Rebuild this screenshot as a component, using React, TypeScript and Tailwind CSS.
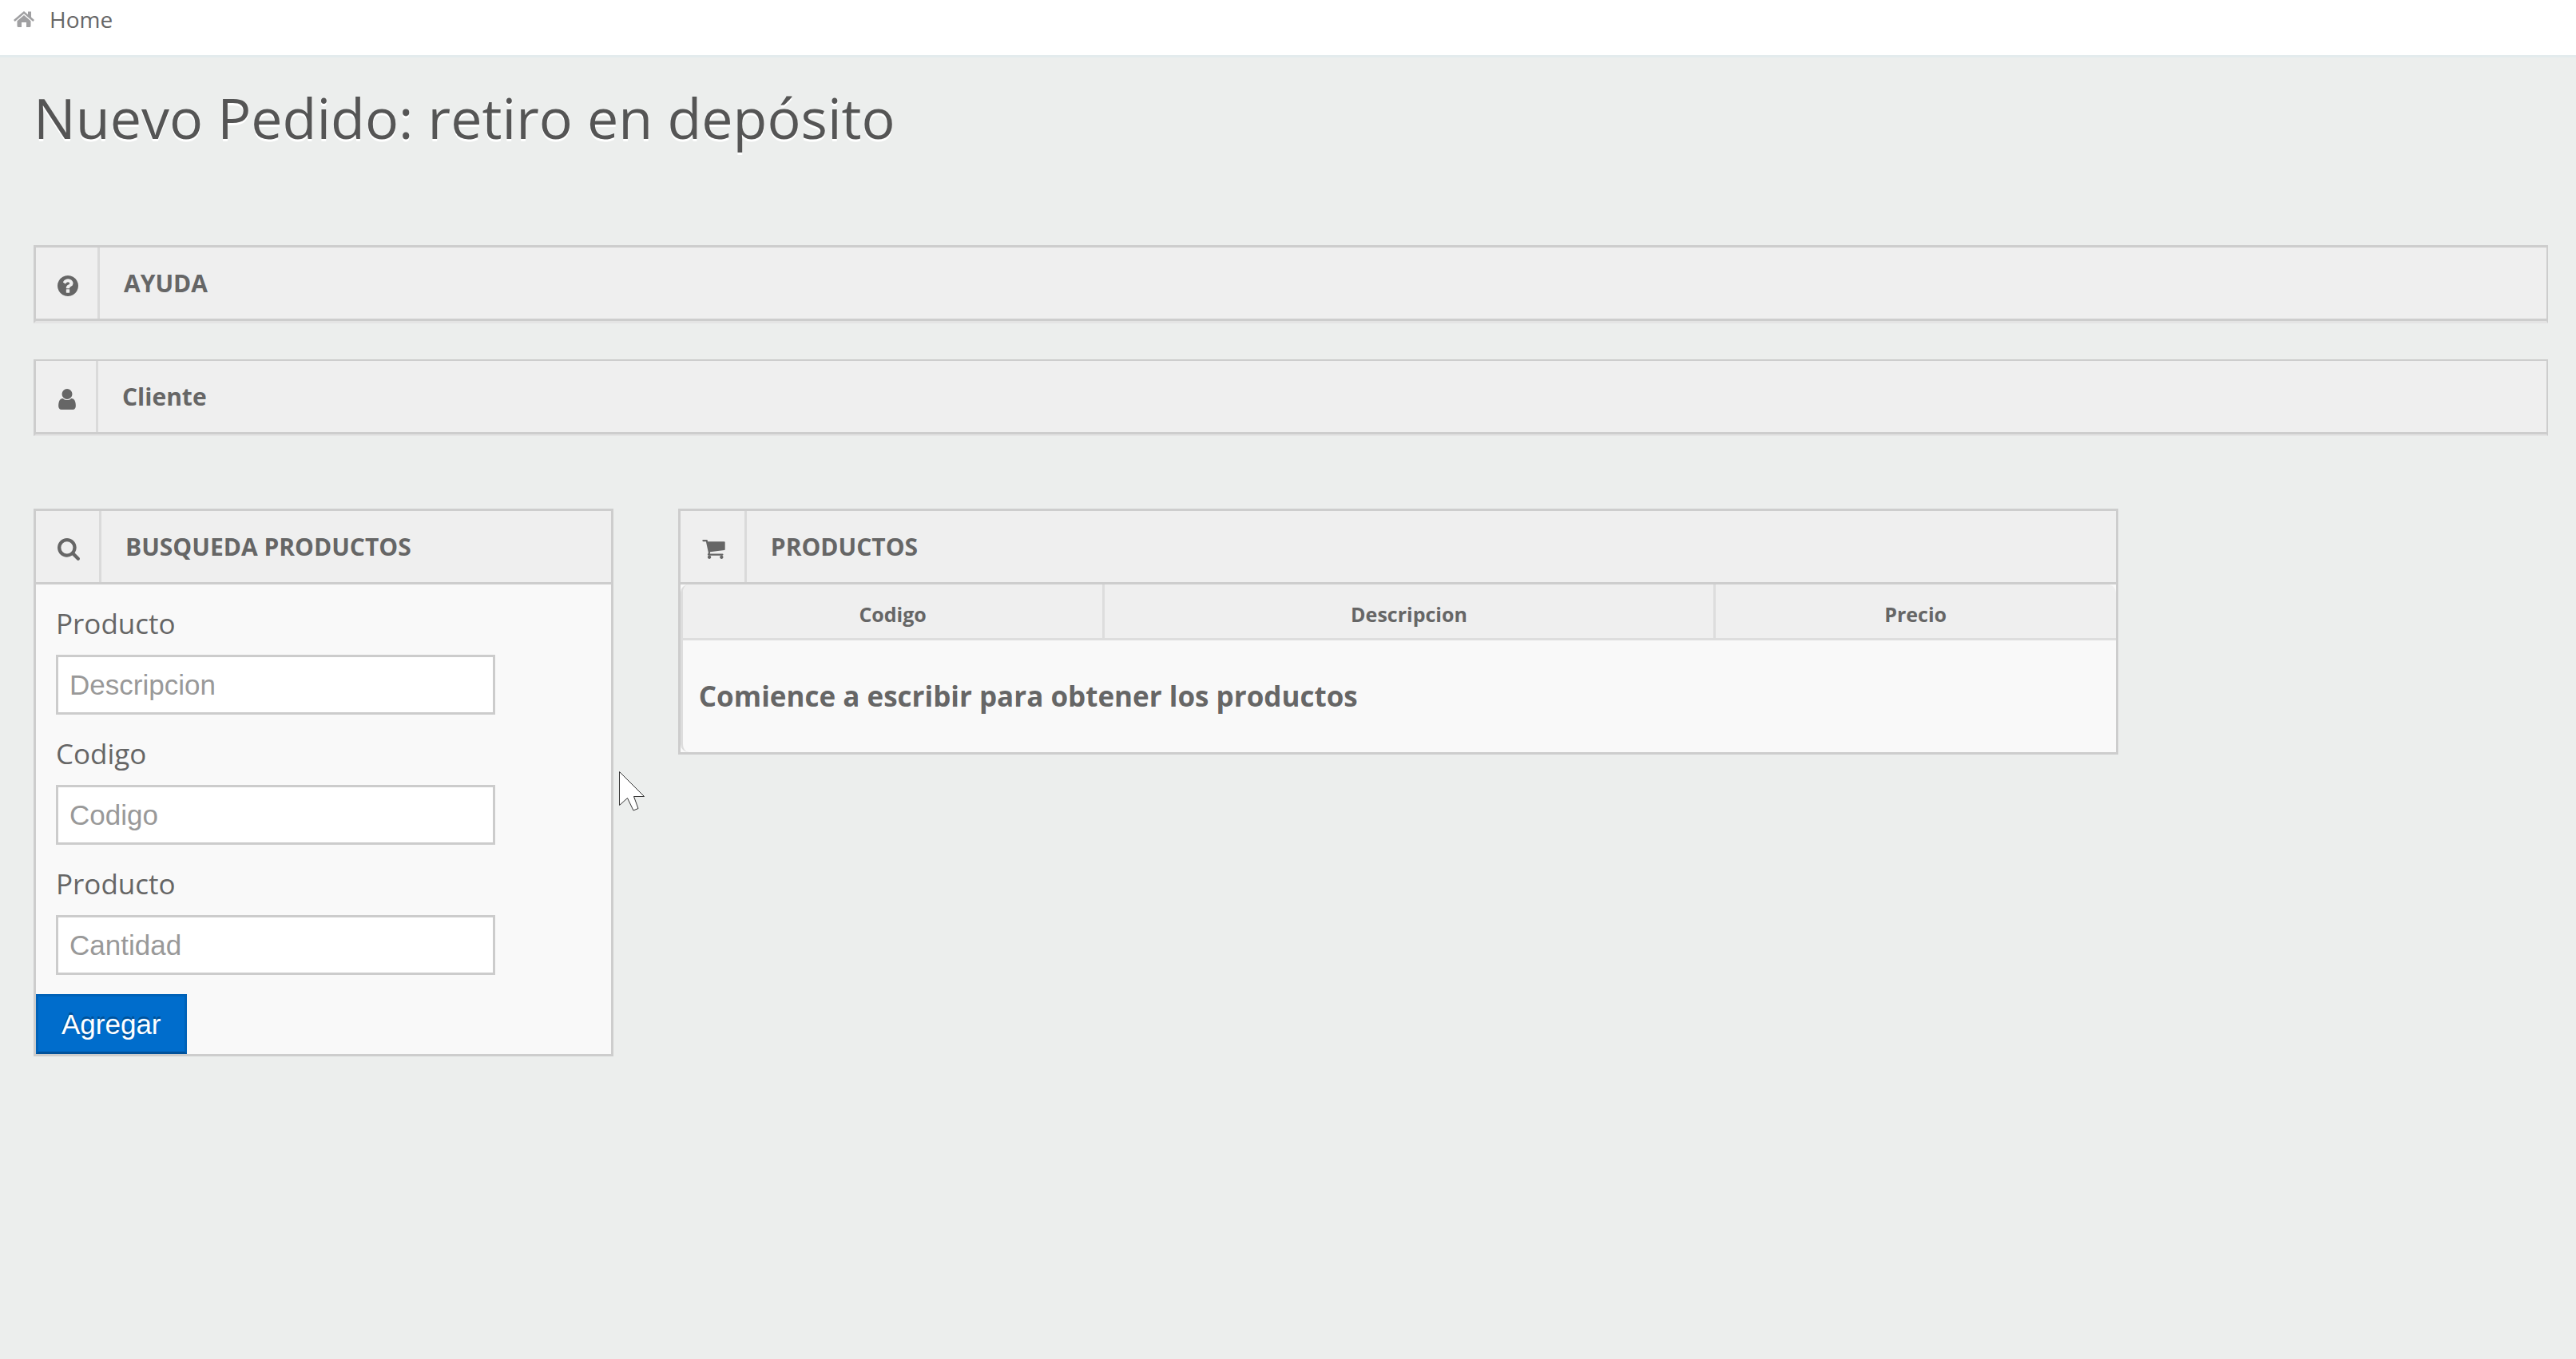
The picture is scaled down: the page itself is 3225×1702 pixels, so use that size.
import React from "react";

const QUESTION =
  "M1024 1376v-192q0-14-9-23t-23-9h-192q-14 0-23 9t-9 23v192q0 14 9 23t23 9h192q14 0 23-9t9-23zm256-672q0-88-55.5-163t-138.5-116-170-41q-243 0-371 213-15 24 8 42l132 100q7 6 19 6 16 0 25-12 53-68 86-92 34-24 86-24 48 0 85.5 26t37.5 59q0 38-20 61t-68 45q-63 28-115.5 86.5t-52.5 125.5v36q0 14 9 23t23 9h192q14 0 23-9t9-23q0-19 21.5-49.5t54.5-49.5q32-18 49-28.5t46-35 44.5-48 28-60.5 12.5-81zm384 192q0 209-103 385.5t-279.5 279.5-385.5 103-385.5-103-279.5-279.5-103-385.5 103-385.5 279.5-279.5 385.5-103 385.5 103 279.5 279.5 103 385.5z";
const USER =
  "M1536 1399q0 109-62.5 187t-150.5 78h-854q-88 0-150.5-78t-62.5-187q0-85 8.5-160.5t31.5-152 58.5-131 94-89 134.5-34.5q131 128 313 128t313-128q76 0 134.5 34.5t94 89 58.5 131 31.5 152 8.5 160.5zm-256-887q0 159-112.5 271.5t-271.5 112.5-271.5-112.5-112.5-271.5 112.5-271.5 271.5-112.5 271.5 112.5 112.5 271.5z";
const SEARCH =
  "M1216 832q0-185-131.5-316.5t-316.5-131.5-316.5 131.5-131.5 316.5 131.5 316.5 316.5 131.5 316.5-131.5 131.5-316.5zm512 832q0 52-38 90t-90 38q-54 0-90-38l-343-342q-179 124-399 124-143 0-273.5-55.5t-225-150-150-225-55.5-273.5 55.5-273.5 150-225 225-150 273.5-55.5 273.5 55.5 225 150 150 225 55.5 273.5q0 220-124 399l343 343q37 37 37 90z";
const CART =
  "M704 1536q0 52-38 90t-90 38-90-38-38-90 38-90 90-38 90 38 38 90zm896 0q0 52-38 90t-90 38-90-38-38-90 38-90 90-38 90 38 38 90zm128-1088v512q0 24-16.5 42.5t-40.5 21.5l-1044 122q13 60 13 70 0 16-24 64h920q26 0 45 19t19 45-19 45-45 19h-1024q-26 0-45-19t-19-45q0-11 8-31.5t16-36 21.5-40 15.5-29.5l-177-823h-204q-26 0-45-19t-19-45 19-45 45-19h256q16 0 28.5 6.5t19.5 15.5 13 24.5 8 26 5.5 29.5 4.5 26h1201q26 0 45 19t19 45z";

function PanelTitle({ icon, viewBox, iconClass, children }: { icon: string; viewBox: string; iconClass: string; children: React.ReactNode }) {
  return (
    <div className="flex h-[92px] border-b-3 border-[#cdcdcd] bg-[#efefef]">
      <span className="flex shrink-0 items-center border-r-3 border-[#dadada] pr-6 pl-[27px] pt-[7px]">
        <svg className={iconClass} viewBox={viewBox} fill="currentColor" aria-hidden="true">
          <path d={icon} />
        </svg>
      </span>
      <h5 className="pl-[30px] text-[30px] leading-[89px] font-bold">{children}</h5>
    </div>
  );
}

function Field({ id, label, placeholder }: { id: string; label: string; placeholder: string }) {
  return (
    <div className="flex flex-col">
      <label htmlFor={id} className="pt-6 pb-[14px] text-[35px] leading-[50px]">
        {label}
      </label>
      <input
        id={id}
        type="text"
        placeholder={placeholder}
        className="h-[75px] w-[550px] max-w-full border-3 border-[#cccccc] bg-white px-[14px] font-['Liberation_Sans',sans-serif] text-[35px] text-[#555555] outline-none placeholder:text-[#999999]"
      />
    </div>
  );
}

export default function App() {
  return (
    <div className="relative min-h-screen bg-[#eceeed] font-['Open_Sans',sans-serif] text-[#666666]">
      <nav className="flex h-[72px] items-start border-b-3 border-[#e3ebed] bg-white pl-[17px]">
        <a href="#" className="flex items-center gap-[19px] text-[28px] leading-[48px]">
          <svg className="h-5 w-[26px] text-[#a0a0a2]" viewBox="0 0 26 20" fill="currentColor" aria-hidden="true">
            <path d="M13 0 0 11l1.700 2L13 3.200l11.300 9.800L26 11l-4-3.500V.5h-4v3.700z" />
            <path d="M13 5 4.500 12.300v6.200Q4.500 20 6 20h4v-6h6v6h4q1.500 0 1.500-1.500v-6.200z" />
          </svg>
          Home
        </a>
      </nav>

      <main className="pr-[35px] pl-[42px]">
        <h1 className="pt-[25px] text-[70px] leading-[100px] text-[#555555] [text-shadow:0_3px_0_#ffffff]">
          Nuevo Pedido: retiro en depósito
        </h1>

        <section className="mt-[110px] border-3 border-r-2 border-[#cdcdcd] border-b-[#e4e4e4]">
          <PanelTitle icon={QUESTION} viewBox="128 128 1536 1536" iconClass="size-[26px]">AYUDA</PanelTitle>
        </section>

        <section className="mt-[45px] border-2 border-l-3 border-[#cdcdcd] border-b-[#e4e4e4]">
          <PanelTitle icon={USER} viewBox="256 128 1280 1536" iconClass="h-[26px] w-6">Cliente</PanelTitle>
        </section>

        <div className="mt-[91px] flex items-start gap-[2.57%]">
          <section className="w-[23.06%] border-3 border-[#cdcdcd] bg-[#f9f9f9]">
            <PanelTitle icon={SEARCH} viewBox="64 128 1664 1664" iconClass="size-7">BUSQUEDA PRODUCTOS</PanelTitle>
            <form onSubmit={(e) => e.preventDefault()}>
              <div className="px-[25px]">
                <Field id="producto" label="Producto" placeholder="Descripcion" />
                <Field id="codigo" label="Codigo" placeholder="Codigo" />
                <Field id="cantidad" label="Producto" placeholder="Cantidad" />
              </div>
              <button
                type="submit"
                className="mt-6 block h-[75px] border-3 border-[#0062b8] border-b-[#00529b] bg-[#006dcc] px-[29px] font-['Liberation_Sans',sans-serif] text-[35px] leading-[50px] text-white [text-shadow:0_-3px_0_rgba(0,0,0,0.25)]"
              >
                Agregar
              </button>
            </form>
          </section>

          <section className="w-[57.27%] border-3 border-[#cdcdcd] bg-[#f9f9f9]">
            <PanelTitle icon={CART} viewBox="64 256 1664 1408" iconClass="h-6 w-[29px]">PRODUCTOS</PanelTitle>
            <table className="w-full table-fixed border-separate border-spacing-0 overflow-hidden rounded-[10px] border-l-3 border-[#dddddd]">
              <colgroup>
                <col className="w-[29.3%]" />
                <col className="w-[42.6%]" />
                <col className="w-[28.1%]" />
              </colgroup>
              <thead>
                <tr className="bg-[#efefef] text-[25px] leading-[59px]">
                  <th className="border-b-3 border-[#dddddd] p-0 pt-2 font-bold">Codigo</th>
                  <th className="border-b-3 border-l-3 border-[#dddddd] p-0 pt-2 font-bold">Descripcion</th>
                  <th className="border-b-3 border-l-3 border-[#dddddd] p-0 pt-2 font-bold">Precio</th>
                </tr>
              </thead>
              <tbody>
                <tr>
                  <td colSpan={3} className="px-5 py-[45px] text-[35px] leading-[50px] font-bold">
                    Comience a escribir para obtener los productos
                  </td>
                </tr>
              </tbody>
            </table>
          </section>
        </div>
      </main>

      <svg className="absolute top-[966px] left-[775px] h-[51px] w-8" viewBox="0 0 32 51" fill="#ffffff" stroke="#333333" aria-hidden="true">
        <path d="M.5.500v42L10.500 33.500l7.500 15.500 6-2.500L18.500 31.500h13z" />
      </svg>
    </div>
  );
}
